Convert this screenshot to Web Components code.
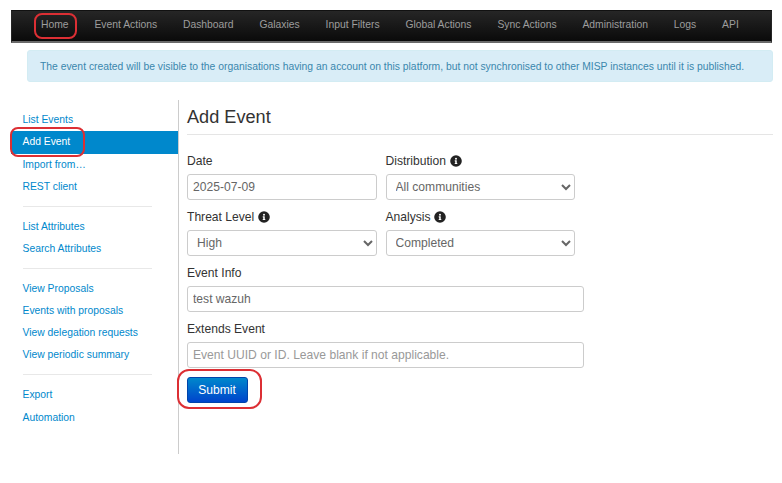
<!DOCTYPE html>
<html lang="en"><head><meta charset="utf-8"><title>Add Event</title>
<style>
html,body{margin:0;padding:0;background:#fff;font-family:"Liberation Sans",Arial,sans-serif;}
body{width:782px;height:483px;overflow:hidden;position:relative;}
</style></head><body>
<misp-page></misp-page>
<template id="t-nav"><style>
:host{display:flex;margin:10px 10px 0 11px;height:33px;box-sizing:border-box;background:linear-gradient(#262626,#0a0a0a);border:1px solid #252525;border-bottom:2px solid #6a6a6a;border-top-color:#111;padding-left:29px;align-items:center;font-size:10.35px;color:#9d9d9d;}
::slotted(span){white-space:nowrap;margin-right:25.85px;margin-top:-4px}
</style><slot></slot></template>
<template id="t-item"><style>
:host{display:block;height:22.25px;line-height:22.25px;padding-left:11.5px;font-size:10.35px;color:#0088cc;white-space:nowrap}
:host([active]){background:#0088cc;color:#fff}
</style><slot></slot></template>
<template id="t-sep"><style>:host{display:block;height:1px;background:#e8e8e8;margin:7.6px 26px 9px 12px}</style></template>
<template id="t-field"><style>
:host{display:flex;flex-direction:column;color:#333;font-size:12.1px}
.l{height:14px;line-height:14px;margin-bottom:6px;display:flex;align-items:center;gap:3.5px;white-space:nowrap}
svg{width:12px;height:12px;display:block}
::slotted(*){box-sizing:border-box;height:26px;border:1px solid #ccc;border-radius:3px;font:12.1px "Liberation Sans",Arial,sans-serif;color:#666;background:#fff;padding:0 5px;margin:0;outline:none;width:100%}
</style><div class="l"><span id="t"></span><svg viewBox="0 0 512 512" id="i" hidden><path fill="#222" d="M256 8a248 248 0 1 0 0 496 248 248 0 0 0 0-496zm0 110a42 42 0 1 1 0 84 42 42 0 0 1 0-84zm56 254a12 12 0 0 1-12 12h-88a12 12 0 0 1-12-12v-24a12 12 0 0 1 12-12h12v-64h-12a12 12 0 0 1-12-12v-24a12 12 0 0 1 12-12h64a12 12 0 0 1 12 12v100h12a12 12 0 0 1 12 12z"/></svg></div><slot></slot></template>
<template id="t-page"><style>
:host{display:block}
.alert{margin:7px 9px 0 27px;height:32px;box-sizing:border-box;background:#d9edf7;border:1px solid #d3ecf3;border-radius:3px;padding-left:12px;line-height:31px;font-size:10.35px;color:#3a87ad;white-space:nowrap}
.main{display:flex;margin:18px 9px 0 11px;height:354px}
.side{width:167px;box-sizing:border-box;padding-top:9px;flex:none}
.content{flex:1;border-left:1px solid #ccc;padding-left:8px;}
h1{margin:0;height:34px;line-height:34px;font-size:18.15px;font-weight:400;color:#333;border-bottom:1px solid #e5e5e5}
.row{display:flex;gap:8.5px;}
.w190{width:190px}.w189{width:189.5px}.w397{width:397px}
form{display:flex;flex-direction:column;gap:10px;padding-top:19px}
.btn{align-self:flex-start;width:61px;height:26px;margin-top:-1px;box-sizing:border-box;border:1px solid #0044aa;border-radius:3px;background:linear-gradient(#0088cc,#0044cc);color:#fff;font:12.1px "Liberation Sans",Arial,sans-serif;padding:0 1px 0 0}
.ring{position:absolute;border:2px solid #dc2f34;box-sizing:border-box;pointer-events:none}
input::placeholder{color:#999}
</style>
<misp-nav><span>Home</span><span>Event Actions</span><span>Dashboard</span><span>Galaxies</span><span>Input Filters</span><span>Global Actions</span><span>Sync Actions</span><span>Administration</span><span>Logs</span><span>API</span></misp-nav>
<div class="alert">The event created will be visible to the organisations having an account on this platform, but not synchronised to other MISP instances until it is published.</div>
<div class="main"><div class="side">
<misp-item>List Events</misp-item><misp-item active>Add Event</misp-item><misp-item>Import from…</misp-item><misp-item>REST client</misp-item>
<misp-sep></misp-sep>
<misp-item>List Attributes</misp-item><misp-item>Search Attributes</misp-item>
<misp-sep></misp-sep>
<misp-item>View Proposals</misp-item><misp-item>Events with proposals</misp-item><misp-item>View delegation requests</misp-item><misp-item>View periodic summary</misp-item>
<misp-sep></misp-sep>
<misp-item>Export</misp-item><misp-item>Automation</misp-item>
</div><div class="content"><h1>Add Event</h1>
<form onsubmit="return false">
<div class="row"><misp-field class="w190" label="Date"><input value="2025-07-09"></misp-field><misp-field class="w189" label="Distribution" info><select><option>All communities</option></select></misp-field></div>
<div class="row"><misp-field class="w190" label="Threat Level" info><select><option>High</option></select></misp-field><misp-field class="w189" label="Analysis" info><select><option>Completed</option></select></misp-field></div>
<misp-field class="w397" label="Event Info"><input value="test wazuh"></misp-field>
<misp-field class="w397" label="Extends Event"><input placeholder="Event UUID or ID. Leave blank if not applicable."></misp-field>
<button class="btn">Submit</button>
</form></div></div>
<div class="ring" style="left:34px;top:13px;width:43px;height:26px;border-radius:8px"></div>
<div class="ring" style="left:10px;top:127px;width:75px;height:30px;border-radius:8px"></div>
<div class="ring" style="left:177px;top:369px;width:85px;height:40px;border-radius:12px"></div>
</template>
<script>
function def(name,tpl,extra){customElements.define(name,class extends HTMLElement{constructor(){super();const r=this.attachShadow({mode:'open'});r.appendChild(document.getElementById(tpl).content.cloneNode(true));}connectedCallback(){extra&&extra.call(this)}});}
def('misp-nav','t-nav');
def('misp-item','t-item');def('misp-sep','t-sep');
def('misp-field','t-field',function(){const s=this.shadowRoot;s.getElementById('t').textContent=this.getAttribute('label');s.getElementById('i').hidden=!this.hasAttribute('info');if(!this.hasAttribute('info'))s.getElementById('i').style.display='none';});
def('misp-page','t-page');
</script>
</body></html>
